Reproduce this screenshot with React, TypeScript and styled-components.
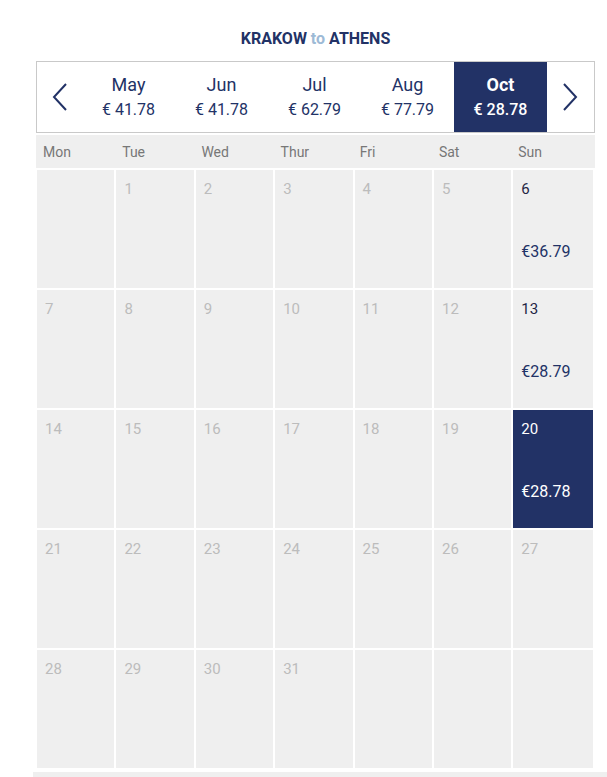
import React from 'react';
import styled, { createGlobalStyle } from 'styled-components';

const navy = '#223266';

const GlobalStyle = createGlobalStyle`
  html, body {
    margin: 0;
    padding: 0;
    background: #ffffff;
    font-family: Roboto, 'Liberation Sans', Arial, sans-serif;
  }
`;

const Page = styled.div`
  width: 607px;
  padding-top: 30px;
`;

const Panel = styled.div`
  margin-left: 36px;
  width: 559px;
`;

const Title = styled.h2`
  margin: 0 0 13px;
  height: 18px;
  text-align: center;
  font-size: 16px;
  font-weight: 700;
  line-height: 18px;
  color: ${navy};
`;

const Connector = styled.span`
  color: #9dbad6;
`;

const MonthBar = styled.div`
  display: flex;
  align-items: stretch;
  height: 72px;
  border: 1px solid #c9c9c9;
  box-sizing: border-box;
`;

const ArrowButton = styled.button`
  all: unset;
  width: 45px;
  display: flex;
  align-items: center;
  justify-content: center;
  cursor: pointer;
`;

const Month = styled.div<{ $active?: boolean }>`
  width: 93px;
  display: flex;
  flex-direction: column;
  align-items: center;
  justify-content: center;
  background: ${(p) => (p.$active ? navy : 'transparent')};
  color: ${(p) => (p.$active ? '#ffffff' : navy)};
`;

const MonthName = styled.div<{ $active?: boolean }>`
  font-size: 18px;
  line-height: 25px;
  font-weight: ${(p) => (p.$active ? 700 : 400)};
`;

const MonthPrice = styled.div<{ $active?: boolean }>`
  font-size: 16px;
  line-height: 25px;
  font-weight: ${(p) => (p.$active ? 500 : 400)};
`;

const WeekHeader = styled.div`
  display: grid;
  grid-template-columns: repeat(7, 79.2px);
  margin-top: 2px;
  height: 33px;
  box-sizing: border-box;
  padding-top: 2px;
  background: #efefef;
`;

const WeekDay = styled.div`
  padding-left: 7px;
  font-size: 14px;
  line-height: 31px;
  color: #777777;
`;

const Grid = styled.div`
  display: grid;
  grid-template-columns: repeat(6, 77.4px) 1fr;
  grid-auto-rows: 118px;
  gap: 2px;
  margin: 2px 2px 0 1px;
`;

const Cell = styled.div<{ $selected?: boolean }>`
  display: flex;
  flex-direction: column;
  padding: 10px 7px 0 8px;
  background: ${(p) => (p.$selected ? navy : '#efefef')};
`;

const DayNumber = styled.div<{ $tone: 'muted' | 'dark' | 'light' }>`
  font-size: 15px;
  line-height: 18px;
  color: ${(p) => (p.$tone === 'muted' ? '#bcbcbc' : p.$tone === 'light' ? '#ffffff' : '#1f2545')};
`;

const DayPrice = styled.div<{ $light?: boolean }>`
  margin-top: 44px;
  font-size: 16px;
  line-height: 20px;
  color: ${(p) => (p.$light ? '#ffffff' : navy)};
`;

const FooterStrip = styled.div`
  margin: 4px 0 0 33px;
  height: 6px;
  background: #efefef;
`;

const Chevron: React.FC<{ dir: 'left' | 'right' }> = ({ dir }) => (
  <svg width="16" height="28" viewBox="0 0 16 28" fill="none">
    <path
      d={dir === 'left' ? 'M14 1 L2 14 L14 27' : 'M2 1 L14 14 L2 27'}
      stroke={navy}
      strokeWidth="2"
      strokeLinejoin="miter"
    />
  </svg>
);

const months = [
  { name: 'May', price: '€ 41.78' },
  { name: 'Jun', price: '€ 41.78' },
  { name: 'Jul', price: '€ 62.79' },
  { name: 'Aug', price: '€ 77.79' },
  { name: 'Oct', price: '€ 28.78', active: true },
];

const weekDays = ['Mon', 'Tue', 'Wed', 'Thur', 'Fri', 'Sat', 'Sun'];

const fares: Record<number, string> = { 6: '€36.79', 13: '€28.79', 20: '€28.78' };
const selectedDay = 20;

// October starts on a Tuesday, so one blank cell leads the grid
const cells: (number | null)[] = [null];
for (let d = 1; d <= 31; d++) cells.push(d);
while (cells.length < 35) cells.push(null);

const App: React.FC = () => (
  <Page>
    <GlobalStyle />
    <Panel>
      <Title>
        KRAKOW <Connector>to</Connector> ATHENS
      </Title>
      <MonthBar>
        <ArrowButton aria-label="Previous">
          <Chevron dir="left" />
        </ArrowButton>
        {months.map((m) => (
          <Month key={m.name} $active={m.active}>
            <MonthName $active={m.active}>{m.name}</MonthName>
            <MonthPrice $active={m.active}>{m.price}</MonthPrice>
          </Month>
        ))}
        <ArrowButton aria-label="Next">
          <Chevron dir="right" />
        </ArrowButton>
      </MonthBar>
      <WeekHeader>
        {weekDays.map((d) => (
          <WeekDay key={d}>{d}</WeekDay>
        ))}
      </WeekHeader>
      <Grid>
        {cells.map((day, i) => {
          const selected = day === selectedDay;
          const fare = day ? fares[day] : undefined;
          return (
            <Cell key={i} $selected={selected}>
              {day && (
                <DayNumber $tone={selected ? 'light' : fare ? 'dark' : 'muted'}>{day}</DayNumber>
              )}
              {fare && <DayPrice $light={selected}>{fare}</DayPrice>}
            </Cell>
          );
        })}
      </Grid>
    </Panel>
    <FooterStrip />
  </Page>
);

export default App;
